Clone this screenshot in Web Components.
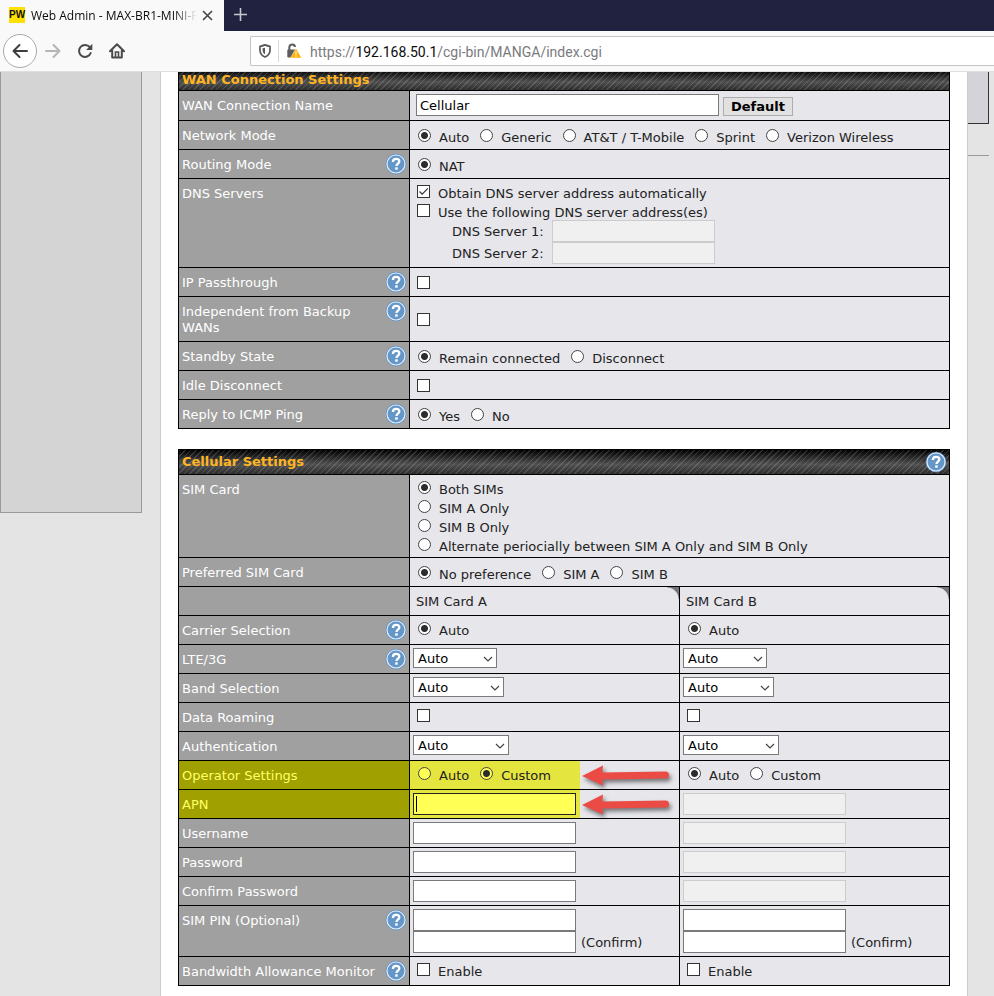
<!DOCTYPE html>
<html lang="en">
<head>
<meta charset="utf-8">
<title>Web Admin - MAX-BR1-MINI</title>
<style>
  body { margin: 0; height: 100vh; overflow: hidden; display: flex; flex-direction: column; background: #e4e4e4; font: 13px/16px "DejaVu Sans", Verdana, sans-serif; color: #222; }
  admin-page { flex: 1; min-height: 0; }
</style>
</head>
<body>
<browser-tabs></browser-tabs>
<browser-toolbar></browser-toolbar>
<admin-page>
  <wan-settings></wan-settings>
  <cellular-settings></cellular-settings>
</admin-page>

<script>
const define = (name, html, setup) => customElements.define(name, class extends HTMLElement {
  constructor() {
    super();
    this.attachShadow({ mode: 'open' });
  }
  connectedCallback() {
    const t = document.createElement('template');
    t.innerHTML = typeof html === 'function' ? html(this) : html;
    this.shadowRoot.replaceChildren(t.content.cloneNode(true));
    if (setup) setup(this);
  }
});

define('help-button', `
<style>
  :host { display: block; width: 20px; height: 20px; }
  button { display: block; padding: 0; border: 0; background: none; width: 20px; height: 20px; }
  svg { display: block; overflow: visible; }
</style>
<button type="button" aria-label="Help">
  <svg width="20" height="20" viewBox="0 0 20 20">
    <circle cx="10" cy="10" r="10.3" fill="#5f93c6"/>
    <circle cx="10" cy="10" r="9" fill="#6496c8" stroke="#e4eef9" stroke-width="1.200"/>
    <path d="M6.900 8.100C6.900 5.900 8.200 4.900 10.100 4.900c1.900 0 3.200 1 3.200 2.600 0 2-2.800 2.200-2.800 4.400" fill="none" stroke="#fff" stroke-width="2.300"/>
    <rect x="9.200" y="13.300" width="2.500" height="2.400" fill="#fff"/>
  </svg>
</button>`);

define('choice-group', el => {
  const type = el.getAttribute('type') || 'radio';
  const selected = el.getAttribute('selected');
  const items = (el.getAttribute('options') || '').split('|').map((text, i) =>
    `<label><input type="${type}" name="choice"${String(i) === selected ? ' checked' : ''}${text ? '' : ` aria-label="${el.getAttribute('label')}"`}>${text ? `<span>${text}</span>` : ''}</label>`).join('');
  return `
<style>
  :host { display: flex; gap: 6px; --field: #fff; }
  :host([stacked]) { flex-direction: column; gap: 0; }
  :host([marked]) { --field: #ffff55; }
  label { display: flex; gap: 8px; height: 19px; white-space: nowrap; }
  span { padding-top: 4px; line-height: 16px; }
  input { appearance: none; box-sizing: border-box; flex: none; width: 13px; height: 13px; margin: 3px 0 0 5px; background: var(--field); border: 1px solid #444; }
  input[type=radio] { border-radius: 50%; }
  input[type=radio]:checked { background: radial-gradient(circle, #2c2c2c 3px, var(--field) 4px); }
  input[type=checkbox] { margin-left: 4px; border-color: #333; }
  input[type=checkbox]:checked { background: #fff url("data:image/svg+xml,%3Csvg xmlns='http://www.w3.org/2000/svg' width='11' height='11'%3E%3Cpath d='M1.500 5.500L4.200 8.200L9.800 2.400' fill='none' stroke='%23333' stroke-width='1.200'/%3E%3C/svg%3E") center no-repeat; }
</style>${items}`;
});

define('text-field', el => `
<style>
  :host { display: block; width: 163px; }
  :host([wide]) { width: 303px; }
  input { display: block; box-sizing: border-box; width: 100%; height: 22px; margin: 0; padding: 2px 3px 1px; border: 1px solid #7a7a7a; border-radius: 0; background: #fff; color: #000; font: inherit; }
  input:disabled { background: #f0f0f0; border-color: #ccc; }
  :host([marked]) input { border-color: #222; background: linear-gradient(#000, #000) 2px center / 1px 16px no-repeat #ffff55; outline: 0; }
</style>
<input type="${el.getAttribute('type') || 'text'}" aria-label="${el.getAttribute('label')}" value="${el.getAttribute('value') || ''}"${el.hasAttribute('disabled') ? ' disabled' : ''}>`);

define('drop-list', el => `
<style>
  :host { display: block; width: 84px; }
  :host([size=medium]) { width: 91px; }
  :host([size=large]) { width: 96px; }
  select { display: block; appearance: none; box-sizing: border-box; width: 100%; height: 20px; padding: 1px 4px 0; border: 1px solid #7a7a7a; border-radius: 0; color: #000; font: inherit;
    background: #fff url("data:image/svg+xml,%3Csvg xmlns='http://www.w3.org/2000/svg' width='10' height='6'%3E%3Cpath d='M1 1L5 5L9 1' fill='none' stroke='%23444' stroke-width='1.200'/%3E%3C/svg%3E") right 3px top 7px no-repeat; }
</style>
<select aria-label="${el.getAttribute('label')}"><option>Auto</option></select>`);

define('red-arrow', `
<style>
  :host { display: block; width: 92px; height: 26px; pointer-events: none; }
  svg { display: block; overflow: visible; filter: drop-shadow(2px 3px 2px rgba(0,0,0,.5)); }
</style>
<svg width="92" height="26" viewBox="0 0 92 26">
  <path d="M0 12L21 1.500L20.500 8.500L83.500 7.500Q87 7.600 87 11Q87 14.600 83.500 14.600L20.500 15.400L21 21.500Z" fill="#ea4b45"/>
</svg>`);

const tableStyle = `
<style>
  :host { display: block; }
  table { width: 100%; table-layout: fixed; border-spacing: 1px; background: #000; }
  .labels { width: 230px; }
  th, td { padding: 0; text-align: left; font-weight: normal; vertical-align: top; }
  thead th { height: 20px; padding: 0 3px; color: #ffb422; font-weight: bold; vertical-align: middle;
    background: repeating-linear-gradient(135deg, rgba(255,255,255,.14) 0 1px, transparent 1px 4px), linear-gradient(#000, #505050 60%, #2c2c2c); }
  .bar { display: flex; justify-content: space-between; align-items: center; height: 24px; }
  tbody th { background: #a0a0a0; color: #fff; padding: 0 3px; }
  .name { display: flex; justify-content: space-between; }
  .name span { padding: 7px 0 5px; }
  .name help-button { flex: none; margin-top: 4px; }
  td { background: #e6e6eb; }
  td.main { padding: 5px 3px 4px; vertical-align: middle; }
  td.stack, td.sim { padding: 3px; }
  td.sim { height: 22px; }
  td.card { padding: 7px 6px 5px; background: radial-gradient(circle at 0 100%, transparent 11px, #77737a 12px) top right / 12px 12px no-repeat #e6e6eb; }
  tr.marked th { background: #a0a000; color: #ffff66; }
  tr.marked td.first { position: relative; background: linear-gradient(#e5e540, #e5e540) left / 170px 100% no-repeat #e6e6eb; }
  red-arrow { position: absolute; left: 172px; top: 3px; }
  .rename { display: flex; align-items: flex-end; gap: 4px; padding: 3px 3px 4px 6px; }
  .rename button { height: 19px; padding: 0 7px; border: 1px solid #adadad; background: #e1e1e1; color: #000; font: bold 13px/16px "DejaVu Sans", sans-serif; }
  .server { display: flex; align-items: center; gap: 8px; padding-left: 39px; }
  .confirm { display: flex; align-items: center; gap: 5px; }
  .server span, .confirm span { padding-top: 2px; }
</style>`;

const label = (text, help) => `<th scope="row"><div class="name"><span>${text}</span>${help ? '<help-button></help-button>' : ''}</div></th>`;
const row = (text, help, content, cls = 'main') => `<tr>${label(text, help)}<td class="${cls}" colspan="2">${content}</td></tr>`;
const radios = (options, extra = '') => `<choice-group selected="0" options="${options}" ${extra}></choice-group>`;
const check = (name, text = '') => `<choice-group type="checkbox" label="${name}" options="${text}"></choice-group>`;

define('wan-settings', `${tableStyle}
<table>
  <colgroup><col class="labels"><col><col></colgroup>
  <thead><tr><th colspan="3">WAN Connection Settings</th></tr></thead>
  <tbody>
    ${row('WAN Connection Name', false, '<div class="rename"><text-field wide label="WAN Connection Name" value="Cellular"></text-field><button type="button">Default</button></div>', '')}
    ${row('Network Mode', false, radios('Auto|Generic|AT&amp;amp;T / T-Mobile|Sprint|Verizon Wireless'))}
    ${row('Routing Mode', true, radios('NAT'))}
    ${row('DNS Servers', false, `
      <choice-group type="checkbox" stacked selected="0" options="Obtain DNS server address automatically|Use the following DNS server address(es)"></choice-group>
      <div class="server"><span>DNS Server 1:</span><text-field disabled label="DNS Server 1"></text-field></div>
      <div class="server"><span>DNS Server 2:</span><text-field disabled label="DNS Server 2"></text-field></div>`, 'stack')}
    ${row('IP Passthrough', true, check('IP Passthrough'))}
    ${row('Independent from Backup WANs', true, check('Independent from Backup WANs'))}
    ${row('Standby State', true, radios('Remain connected|Disconnect'))}
    ${row('Idle Disconnect', false, check('Idle Disconnect'))}
    ${row('Reply to ICMP Ping', true, radios('Yes|No'))}
  </tbody>
</table>`);

const pair = (text, help, a, b = a) => `<tr>${label(text, help)}<td class="sim first">${a}</td><td class="sim">${b}</td></tr>`;
const marked = (text, a, b) => `<tr class="marked">${label(text)}<td class="sim first">${a}<red-arrow></red-arrow></td><td class="sim">${b}</td></tr>`;
const list = (name, size) => `<drop-list label="${name}" size="${size}"></drop-list>`;
const field = (name, extra = '') => `<text-field label="${name}" ${extra}></text-field>`;
const pin = field('SIM PIN', 'type="password"') + `<div class="confirm">${field('Confirm SIM PIN', 'type="password"')}<span>(Confirm)</span></div>`;

define('cellular-settings', `${tableStyle}
<table>
  <colgroup><col class="labels"><col><col></colgroup>
  <thead><tr><th colspan="3"><div class="bar">Cellular Settings<help-button></help-button></div></th></tr></thead>
  <tbody>
    ${row('SIM Card', false, radios('Both SIMs|SIM A Only|SIM B Only|Alternate periocially between SIM A Only and SIM B Only', 'stacked'), 'stack')}
    ${row('Preferred SIM Card', false, radios('No preference|SIM A|SIM B'))}
    <tr><th></th><td class="card">SIM Card A</td><td class="card">SIM Card B</td></tr>
    ${pair('Carrier Selection', true, radios('Auto'))}
    ${pair('LTE/3G', true, list('LTE/3G', 'small'))}
    ${pair('Band Selection', false, list('Band Selection', 'medium'))}
    ${pair('Data Roaming', false, check('Data Roaming'))}
    ${pair('Authentication', false, list('Authentication', 'large'))}
    ${marked('Operator Settings', '<choice-group marked selected="1" options="Auto|Custom"></choice-group>', radios('Auto|Custom'))}
    ${marked('APN', field('APN', 'marked'), field('APN', 'disabled'))}
    ${pair('Username', false, field('Username'), field('Username', 'disabled'))}
    ${pair('Password', false, field('Password', 'type="password"'), field('Password', 'disabled'))}
    ${pair('Confirm Password', false, field('Confirm Password', 'type="password"'), field('Confirm Password', 'disabled'))}
    ${pair('SIM PIN (Optional)', true, pin)}
    ${pair('Bandwidth Allowance Monitor', true, check('Bandwidth Allowance Monitor', 'Enable'))}
  </tbody>
</table>`);

define('admin-page', `
<style>
  :host { display: grid; grid-template-columns: 142px minmax(0, 1fr) 26px; overflow: hidden; }
  nav { height: 440px; border: 1px solid #999; border-top: 0; background: #d4d4d4; }
  main { margin-left: 18px; padding: 0 17px; border: solid #ccc; border-width: 0 1px; background: #fff; }
  .scrolled { display: flex; flex-direction: column; gap: 20px; margin-top: -3px; }
  .panel { height: 51px; margin-right: 5px; border: solid #333; border-width: 0 1px 1px 0; background: #d4d4d8; }
  .rule { height: 31px; margin-right: 5px; border-bottom: 1px solid #999; }
</style>
<nav aria-label="Menu"></nav>
<main><div class="scrolled"><slot></slot></div></main>
<aside><div class="panel"></div><div class="rule"></div></aside>`);

define('browser-tabs', `
<style>
  :host { display: flex; height: 31px; background: #20223f; font: 12px/16px "Open Sans", "Noto Sans", sans-serif; color: #0c0c0d; }
  .tab { box-sizing: border-box; display: flex; align-items: center; width: 224px; padding: 0 10px 1px 9px; background: #f9f9fa; }
  .logo { width: 16px; height: 16px; margin-right: 6px; background: #ffe000; color: #111; font: bold 10px/16px "Liberation Sans", sans-serif; text-align: center; }
  .title { flex: 1; padding-top: 1px; overflow: hidden; white-space: nowrap; mask-image: linear-gradient(90deg, #000 86%, transparent); }
  button { display: flex; padding: 0; border: 0; background: none; }
  .close { margin-left: 4px; }
  .add { padding: 7px 9px; }
</style>
<div class="tab">
  <span class="logo">PW</span><span class="title">Web Admin - MAX-BR1-MINI-F</span>
  <button class="close" type="button" aria-label="Close tab"><svg width="13" height="13" viewBox="0 0 13 13"><path d="M2 2L11 11M11 2L2 11" stroke="#444" stroke-width="1.600"/></svg></button>
</div>
<button class="add" type="button" aria-label="New tab"><svg width="15" height="15" viewBox="0 0 15 15"><path d="M7.500 1V14M1 7.500H14" stroke="#c6c7d0" stroke-width="1.600"/></svg></button>`);

define('browser-toolbar', `
<style>
  :host { box-sizing: border-box; display: flex; align-items: center; height: 41px; padding-left: 3px; border-bottom: 1px solid #dedede; background: #f9f9fa; font: 14px/18px Roboto, "Noto Sans", sans-serif; color: #7a7a7e; }
  button { flex: none; display: flex; align-items: center; justify-content: center; width: 32px; height: 34px; padding: 0; border: 0; background: none; }
  .back { box-sizing: border-box; width: 34px; border: 1px solid #aaa; border-radius: 50%; background: #fff; }
  .address { box-sizing: border-box; display: flex; align-items: center; flex: 1; height: 30px; margin-left: 117px; padding-left: 8px; border: 1px solid #c4c4c8; border-right: 0; border-radius: 2px 0 0 2px; background: #fff; }
  .address svg { flex: none; }
  .split { width: 1px; height: 22px; margin: 0 7px; background: #d7d7db; }
  .url { flex: 1; margin-left: 8px; padding-top: 1px; white-space: nowrap; }
  b { color: #0c0c0d; font-weight: normal; }
</style>
<button class="back" type="button" aria-label="Back"><svg width="18" height="16" viewBox="0 0 18 16"><path d="M16 8H2.500M8.500 2L2.500 8L8.500 14" fill="none" stroke="#3d3d3f" stroke-width="2" stroke-linecap="round" stroke-linejoin="round"/></svg></button>
<button type="button" aria-label="Forward" disabled><svg width="18" height="16" viewBox="0 0 18 16"><path d="M2 8H15.500M9.500 2L15.500 8L9.500 14" fill="none" stroke="#b5b5b8" stroke-width="2" stroke-linecap="round" stroke-linejoin="round"/></svg></button>
<button type="button" aria-label="Reload"><svg width="16" height="16" viewBox="0 0 16 16"><path d="M12.800 4.200A6 6 0 1 0 13.700 10" fill="none" stroke="#4a4a4c" stroke-width="2" stroke-linecap="round"/><path d="M15.300 .800V7H9.100Z" fill="#4a4a4c"/></svg></button>
<button type="button" aria-label="Home"><svg width="16" height="16" viewBox="0 0 16 16"><path d="M1 8.300L8 1.200L15 8.300M3.200 7.500V14.600H12.800V7.500" fill="none" stroke="#4a4a4c" stroke-width="2" stroke-linecap="round" stroke-linejoin="round"/><path d="M6.500 14V9H9.500V14" fill="none" stroke="#4a4a4c" stroke-width="1.600"/></svg></button>
<div class="address">
  <svg width="12" height="14" viewBox="0 0 12 14"><path d="M1 2.300Q3.500 2 6 .900Q8.500 2 11 2.300V6.500Q10.800 11 6 13Q1.200 11 1 6.500Z" fill="none" stroke="#58585b" stroke-width="1.700" stroke-linejoin="round"/><path d="M6 3.800V10.200Q3.600 8.800 3.600 6.500V4.300Z" fill="#58585b"/></svg>
  <span class="split"></span>
  <svg width="16" height="16" viewBox="0 0 16 16"><path d="M3.300 7V4.500Q3.400 1.500 6.300 1.500Q8.800 1.500 9 4" fill="none" stroke="#5c5c5f" stroke-width="2"/><rect x="1.300" y="6.500" width="9.200" height="8" rx="1" fill="#5c5c5f"/><path d="M10 5.200L15.700 15H4.500Z" fill="#ffb000" stroke="#fff" stroke-width=".5" stroke-linejoin="round"/><path d="M10 8.500V11.500M10 12.600V13.800" stroke="#fff" stroke-width="1.200"/></svg>
  <div class="url" role="textbox" aria-label="Address" tabindex="0">https://<b>192.168.50.1</b>/cgi-bin/MANGA/index.cgi</div>
</div>`);
</script>
</body>
</html>
